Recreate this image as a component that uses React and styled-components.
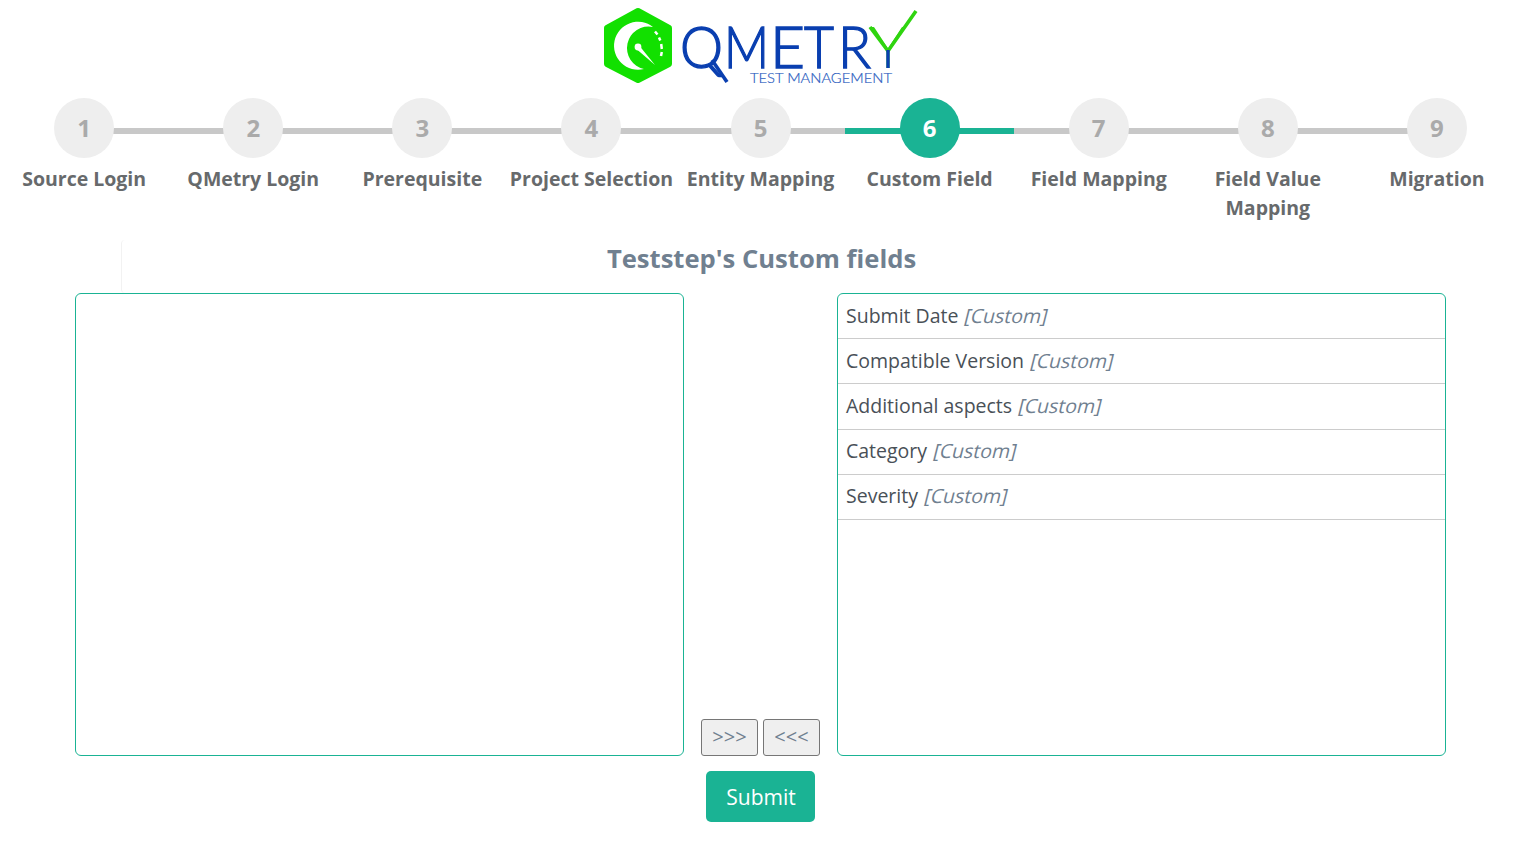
import React from "react";
import styled, { createGlobalStyle } from "styled-components";

const steps = [
  "Source Login",
  "QMetry Login",
  "Prerequisite",
  "Project Selection",
  "Entity Mapping",
  "Custom Field",
  "Field Mapping",
  "Field Value Mapping",
  "Migration",
];

const ACTIVE_STEP = 6;

const customFields = [
  "Submit Date",
  "Compatible Version",
  "Additional aspects",
  "Category",
  "Severity",
];

// each logo letter gets its own x and width, the brand letters are narrower than Lato
const logoLetters = [
  { c: "Q", x: 680, w: 43 },
  { c: "M", x: 724, w: 45 },
  { c: "E", x: 770, w: 35 },
  { c: "T", x: 804, w: 30 },
  { c: "R", x: 838, w: 33 },
];

const Logo = () => (
  <svg width="320" height="86" viewBox="601 0 320 86">
    <path
      d="M638 11 L669 28 L669 64 L638 80 L607 64 L607 28 Z"
      fill="#12e000"
      stroke="#12e000"
      strokeWidth="6"
      strokeLinejoin="round"
    />
    <path
      d="M653 27 A24 24 0 1 0 644 69 A19 19 0 1 1 653 27 Z"
      fill="#fff"
    />
    <path
      d="M655 31.5 L657.5 34.5 M659 37.5 L660.3 40.5 M661.2 44 L661.8 49 M661.8 52 L661 56"
      stroke="#fff"
      strokeWidth="2.5"
      fill="none"
    />
    <circle cx="638" cy="47" r="3.4" fill="#fff" />
    <path d="M637 49.5 L640 46.5 L655 65 Z" fill="#fff" />
    {logoLetters.map((l) => (
      <text
        key={l.c}
        x={l.x}
        y="68"
        fontFamily="Lato, sans-serif"
        fontWeight="300"
        fontSize="57"
        fill="#0a3fb0"
        stroke="#0a3fb0"
        strokeWidth="1.4"
        textLength={l.w}
        lengthAdjust="spacingAndGlyphs"
      >
        {l.c}
      </text>
    ))}
    <text
      x="870"
      y="68"
      fontFamily="Lato, sans-serif"
      fontWeight="300"
      fontSize="57"
      fill="#2fd40f"
      textLength="36"
      lengthAdjust="spacingAndGlyphs"
    >
      Y
    </text>
    <path d="M712 60 L727 82" stroke="#0a3fb0" strokeWidth="3.6" />
    <path d="M870 27 L888 51 L916 11" stroke="#2fd40f" strokeWidth="3.6" fill="none" />
    <path d="M888 50 L888 68" stroke="#0a3fb0" strokeWidth="3.4" />
    <text
      x="750"
      y="83"
      fontFamily="Lato, sans-serif"
      fontWeight="300"
      fontSize="14.5"
      fill="#2a5cc0"
      stroke="#2a5cc0"
      strokeWidth="0.2"
      textLength="142"
      lengthAdjust="spacingAndGlyphs"
    >
      TEST MANAGEMENT
    </text>
  </svg>
);

const App = () => {
  return (
    <Page>
      <GlobalStyle />
      <Header>
        <Logo />
      </Header>
      <Stepper>
        {steps.map((label, i) => (
          <Step
            key={label}
            $active={i + 1 === ACTIVE_STEP}
            $first={i === 0}
            $last={i === steps.length - 1}
          >
            <Circle $active={i + 1 === ACTIVE_STEP}>{i + 1}</Circle>
            <StepLabel>{label}</StepLabel>
          </Step>
        ))}
      </Stepper>
      <Title>Teststep's Custom fields</Title>
      <Board>
        <ListBox />
        <Arrows>
          <ArrowButton>&gt;&gt;&gt;</ArrowButton>
          <ArrowButton>&lt;&lt;&lt;</ArrowButton>
        </Arrows>
        <ListBox>
          {customFields.map((name) => (
            <ListRow key={name}>
              {name} <Tag>[Custom]</Tag>
            </ListRow>
          ))}
        </ListBox>
      </Board>
      <Footer>
        <SubmitButton>Submit</SubmitButton>
      </Footer>
    </Page>
  );
};

export default App;

const GlobalStyle = createGlobalStyle`
  html, body {
    margin: 0;
    overflow-x: hidden;
    background: #ffffff;
  }
  * {
    box-sizing: border-box;
  }
`;

const Page = styled.div`
  width: 1522px;
  font-family: "Open Sans", sans-serif;
`;

const Header = styled.div`
  display: flex;
  justify-content: center;
  height: 98px;
`;

const Stepper = styled.div`
  display: grid;
  grid-template-columns: repeat(9, 169.1px);
  height: 142px;
  margin-left: -0.4px;
`;

const Step = styled.div`
  position: relative;
  display: flex;
  flex-direction: column;
  align-items: center;
  text-align: center;

  &::before {
    content: "";
    position: absolute;
    top: 30px;
    left: ${(p) => (p.$first ? "50%" : "0")};
    right: ${(p) => (p.$last ? "50%" : "0")};
    height: 6px;
    background: ${(p) => (p.$active ? "#1ab394" : "#c8c8c8")};
  }
`;

const Circle = styled.div`
  position: relative;
  width: 60px;
  height: 60px;
  padding-bottom: 2px;
  border-radius: 50%;
  display: flex;
  align-items: center;
  justify-content: center;
  font-size: 24px;
  font-weight: 700;
  background: ${(p) => (p.$active ? "#1ab394" : "#eeeeee")};
  color: ${(p) => (p.$active ? "#ffffff" : "#aaaaaa")};
`;

const StepLabel = styled.div`
  margin-top: 6px;
  font-size: 19.5px;
  font-weight: 700;
  line-height: 29px;
  color: #676a6c;
`;

const Title = styled.h2`
  width: 1280px;
  height: 53px;
  margin: 0 0 0 121px;
  border-left: 1px solid #f2f2f2;
  border-radius: 4px;
  text-align: center;
  font-size: 25.6px;
  font-weight: 700;
  line-height: 38px;
  color: #708090;
`;

const Board = styled.div`
  display: flex;
  align-items: flex-end;
  margin-left: 75px;
`;

const ListBox = styled.div`
  width: 609px;
  height: 463px;
  border: 1px solid #1ab394;
  border-radius: 6px;
  overflow: hidden;
`;

const Arrows = styled.div`
  display: flex;
  gap: 5px;
  width: 153px;
  justify-content: center;
`;

const ArrowButton = styled.button`
  width: 57px;
  height: 37px;
  padding: 0 0 2px;
  background: #efefef;
  border: 1px solid #767676;
  border-radius: 3px;
  font-family: "Open Sans", sans-serif;
  font-size: 20px;
  color: #708090;
`;

const ListRow = styled.div`
  height: 45.2px;
  padding: 0 8px 2px;
  display: flex;
  align-items: center;
  gap: 7px;
  border-bottom: 1px solid #cccccc;
  font-size: 19.5px;
  color: #495057;
`;

// the reference slants the upright face, it does not use the true italic cut
const Tag = styled.span`
  display: inline-block;
  color: #708090;
  transform: skewX(-14deg);
`;

const Footer = styled.div`
  display: flex;
  justify-content: center;
  margin-top: 15px;
  padding-right: 2px;
`;

const SubmitButton = styled.button`
  width: 109px;
  height: 51px;
  padding: 0 0 0 2px;
  border: none;
  border-radius: 5px;
  background: #1ab394;
  color: #ffffff;
  font-family: "Open Sans", sans-serif;
  font-size: 21px;
`;
